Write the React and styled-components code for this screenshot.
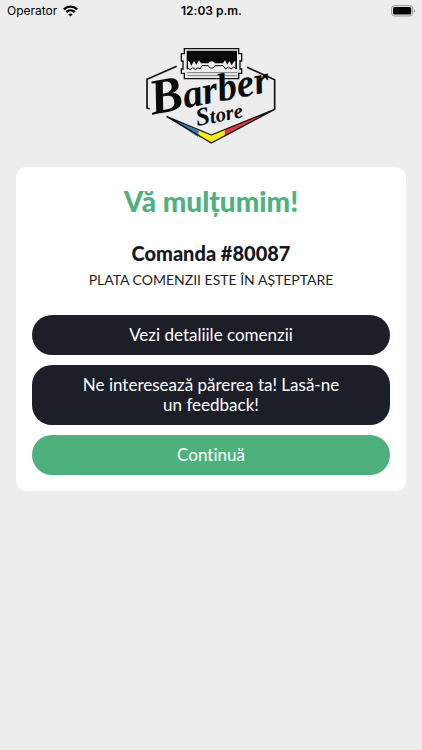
import React from "react";
import styled, { createGlobalStyle } from "styled-components";

const GlobalStyle = createGlobalStyle`
  *, *::before, *::after { box-sizing: border-box; }
  body {
    margin: 0;
    background: #ededed;
    color: #1b1f28;
    font-family: Lato, "Open Sans", sans-serif;
    font-variant-ligatures: none;
  }
`;

const Page = styled.div`
  display: flex;
  flex-direction: column;
  min-height: 100vh;
`;

const StatusBar = styled.header`
  display: grid;
  grid-template-columns: 1fr auto 1fr;
  align-items: center;
  height: 22px;
  padding: 0 6px 0 7px;
  color: #000;
  font-family: Inter, "Liberation Sans", sans-serif;
  font-size: 12px;
  line-height: 16px;
`;

const Carrier = styled.div`
  display: flex;
  align-items: center;
  gap: 6px;
`;

const Clock = styled.time`
  font-weight: 600;
`;

const BatterySlot = styled.div`
  display: flex;
  justify-content: flex-end;
`;

const Brand = styled.div`
  display: flex;
  justify-content: center;
  padding: 18px 0 17px;
`;

const Card = styled.main`
  display: flex;
  flex-direction: column;
  margin: 0 16px;
  padding: 16px;
  border-radius: 10px;
  background: #fff;
  text-align: center;
`;

const Title = styled.h1`
  margin: 0;
  color: #50b080;
  font-size: 28px;
  font-weight: 900;
  line-height: 36px;
`;

const OrderNumber = styled.h2`
  margin: 22px 0 0;
  color: #15181f;
  font-size: 20px;
  font-weight: 900;
  line-height: 24px;
`;

const OrderStatus = styled.p`
  margin: 5px 0 0;
  font-size: 14px;
  line-height: 20px;
  text-transform: uppercase;
`;

const Actions = styled.div`
  display: flex;
  flex-direction: column;
  gap: 10px;
  margin-top: 25px;
`;

const ActionButton = styled.button`
  width: 100%;
  padding: 10px 48px;
  border: 0;
  border-radius: 20px;
  background: ${({ $primary }) => ($primary ? "#4eb07d" : "#1c1f28")};
  color: #fff;
  font: 400 17px/20px Lato, "Open Sans", sans-serif;
  font-variant-ligatures: none;
  cursor: pointer;
`;

const WifiIcon = () => (
  <svg width="15" height="12" viewBox="0 0 15 12" fill="none" stroke="#000" strokeWidth="2.4" aria-label="Wi-Fi">
    <path d="M.8 4.3C4.6.7 10.4.7 14.2 4.3" />
    <path d="M3.3 7c2.4-2.2 6-2.2 8.4 0" />
    <path d="M7.5 11.5 5.3 9.2c1.3-1.1 3.1-1.1 4.4 0z" fill="#000" stroke="none" />
  </svg>
);

const BatteryIcon = () => (
  <svg width="25" height="12" viewBox="0 0 25 12" aria-label="Battery">
    <rect x=".6" y=".6" width="21" height="10.4" rx="3" fill="none" stroke="#969696" />
    <rect x="2" y="2" width="18.2" height="7.6" rx="1.6" />
    <path d="M23 4.2c1.6.5 1.6 2.7 0 3.2z" fill="#888" />
  </svg>
);

const Letters = styled.text`
  font-family: "Liberation Serif", serif;
  font-style: italic;
  font-weight: 700;
  fill: #0b0b0b;
`;

const Logo = () => (
  <svg width="145" height="110" viewBox="-2 0 435 330" role="img" aria-label="Barber Store">
    <g fill="none" stroke="#111" strokeWidth="5">
      <path d="M111 79 22 118v86l8 3M322 82l83 37v89" />
      <path d="M134 26h163v15h9v22h-5v24h5v13h-9v16H134v-16h-9V87h5V63h-5V41h9z" strokeWidth="4" />
      <path d="M143 98h150M143 107h150" strokeWidth="2" stroke="#444" />
    </g>
    <path d="M141 32h151v56H141z" fill="#0b0b0b" />
    <path
      d="m145 62 5 4 5 11 8-14 7 11 8-13 6 9h22c3-8 17-8 20 0h24l6-9 7 13 6-11 7 13 6-10 5-4v31H145z"
      fill="#ededed"
    />
    <path
      d="m145 84 6 5 8-6 8 6 8-6 6 4 6-10h19c3 10 17 10 20 0h24l8 10 8-6 8 6 8-6 6 4"
      fill="none"
      stroke="#111"
      strokeWidth="3"
    />
    <path d="m82 230 96 42-2 20z" fill="#347fb0" />
    <path d="m178 270 37 17 40-19v22l-40 19-39-19z" fill="#ffed19" />
    <path d="m255 268 150-60-150 82z" fill="#dd3940" />
    <path
      d="m82 230 133 55 190-77-190 101z"
      fill="none"
      stroke="#111"
      strokeWidth="4"
      strokeLinejoin="round"
    />
    <g transform="rotate(-11 48 222)">
      <Letters x="38" y="222">
        <tspan fontSize="150">B</tspan>
        <tspan fontSize="118">arber</tspan>
      </Letters>
    </g>
    <g transform="rotate(-11 174 254)">
      <Letters x="172" y="258">
        <tspan fontSize="76">S</tspan>
        <tspan fontSize="62">tore</tspan>
      </Letters>
    </g>
  </svg>
);

export default function App() {
  return (
    <>
      <GlobalStyle />
      <Page>
        <StatusBar>
          <Carrier>
            <span>Operator</span>
            <WifiIcon />
          </Carrier>
          <Clock>12:03 p.m.</Clock>
          <BatterySlot>
            <BatteryIcon />
          </BatterySlot>
        </StatusBar>
        <Brand>
          <Logo />
        </Brand>
        <Card>
          <Title>Vă mulțumim!</Title>
          <OrderNumber>Comanda #80087</OrderNumber>
          <OrderStatus>Plata comenzii este în așteptare</OrderStatus>
          <Actions>
            <ActionButton type="button">Vezi detaliile comenzii</ActionButton>
            <ActionButton type="button">Ne interesează părerea ta! Lasă-ne un feedback!</ActionButton>
            <ActionButton type="button" $primary>Continuă</ActionButton>
          </Actions>
        </Card>
      </Page>
    </>
  );
}
